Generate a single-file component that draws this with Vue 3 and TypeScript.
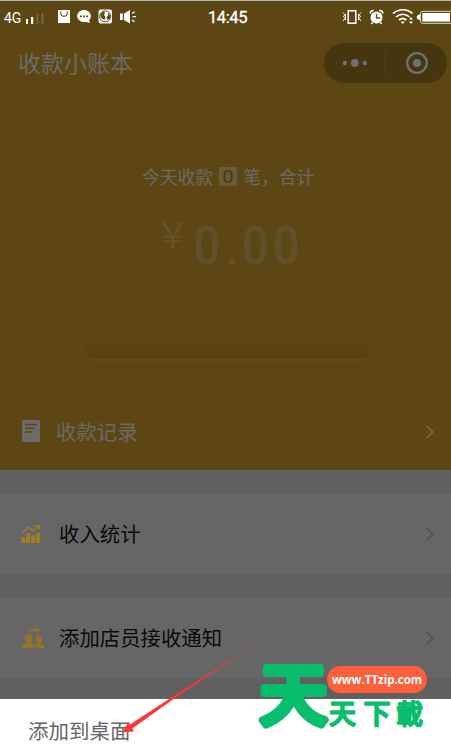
<script setup lang="ts">
interface MenuItem {
  id: 'stats' | 'staff'
  label: string
}

const menu: MenuItem[] = [
  { id: 'stats', label: '收入统计' },
  { id: 'staff', label: '添加店员接收通知' },
]
</script>

<template>
  <main class="phone">
    <section class="hero">
      <div class="status">
        <span class="network">4G</span>
        <svg class="signal" width="18" height="12" viewBox="0 0 18 12">
          <path d="M0 6h2v5H0zM5 4h2.200v7H5z" fill="#fff" />
          <path d="M10.500 1.500h1.800v9.500h-1.800zM15.500 0h1.800v11h-1.800z" fill="#7b6840" />
        </svg>
        <svg class="notices" width="80" height="18" viewBox="0 0 80 18">
          <rect x="0" y="2" width="12" height="13" fill="#fff" />
          <path d="M2.800 3.500v1.500a3.200 3.200 0 0 0 6.400 0V3.500" fill="none" stroke="#5c4714" stroke-width="1.100" />
          <path d="M26 2c4 0 6.800 2.700 6.800 6 0 2-.7 3.300-1.800 4.400l1 2.600-3.600-1.100c-5 1-9.200-1.900-9.200-5.900 0-3.300 2.800-6 6.800-6z" fill="#fff" />
          <path d="M22 7.500h1.800v1.800H22zM25.100 7.500h1.800v1.800h-1.800zM28.200 7.500H30v1.800h-1.800z" fill="#5c4714" />
          <rect x="40.500" y="1.500" width="13.500" height="14" rx="2" fill="#fff" />
          <circle cx="47.200" cy="8.400" r="5.500" fill="none" stroke="#5c4714" stroke-width="1" />
          <path d="M42.500 6l3-2.500 1.500 1-1 2.500 1.500 2-1 3-2.500-1.500-1.500-2zM50 4.500l2 3v3l-2.500 1.500-1-2.500 1.500-2z" fill="#5c4714" />
          <path d="M62 5.500h2.800v6.500H62zM66 5.500l6-3.500v13.500l-6-3.500z" fill="#fff" />
          <path d="M74 5.500l2.700-1.700M74.500 8.700H78M74 12l2.700 1.700" stroke="#fff" stroke-width="1.200" />
        </svg>
        <time class="clock">14:45</time>
        <svg class="device" width="109" height="20" viewBox="0 0 109 20">
          <rect x="6.200" y="3.700" width="7.600" height="12.500" fill="none" stroke="#fff" stroke-width="1.500" />
          <path d="M1 5.500l2 2-1.500 2 1.500 2-2 2.500M3.500 7v6M19 5.500l-2 2 1.500 2-1.500 2 2 2.500M16.500 7v6" fill="none" stroke="#fff" stroke-width="1" />
          <circle cx="34.500" cy="10.500" r="6" fill="#fff" />
          <path d="M28.200 6.500a3 3 0 0 1 3.500-3M37.300 3.500a3 3 0 0 1 3.500 3M30.500 15.500l-1 1.500M38.500 15.500l1 1.500" fill="none" stroke="#fff" stroke-width="1.600" />
          <path d="M34.500 6.800v4.200h3.700" fill="none" stroke="#5c4714" stroke-width="1.300" />
          <path d="M51 6.500c6-5 14-5 19.500 0M54 10c4-3.700 9.500-3.700 13.500 0M57 13c2.500-2 5-2 7.500 0" fill="none" stroke="#fff" stroke-width="1.700" />
          <path d="M58.500 14.500h4.500l-2.200 2.500zM67 12.500l2-2.500 2 2.500zM67 14.500l2 2.500 2-2.500z" fill="#fff" />
          <path d="M109 4.300H80.500a2 2 0 0 0-2 2v8a2 2 0 0 0 2 2H109" fill="none" stroke="#ddd8c9" stroke-width="1" />
          <rect x="80.300" y="6" width="27.700" height="8.600" fill="#fff" />
          <path d="M78 7.500h-1a2.800 2.800 0 0 0 0 5.500h1z" fill="#fff" />
        </svg>
      </div>

      <header class="titlebar">
        <h1>收款小账本</h1>
        <div class="capsule">
          <svg width="26" height="12" viewBox="0 0 26 12" fill="#707070">
            <circle cx="2.800" cy="6" r="2.200" /><circle cx="12.800" cy="6" r="3.900" /><circle cx="22.800" cy="6" r="2.200" />
          </svg>
          <i class="capsule-line"></i>
          <svg width="24" height="24" viewBox="0 0 24 24">
            <circle cx="12" cy="12" r="9.800" fill="none" stroke="#707070" stroke-width="2.300" />
            <circle cx="12" cy="12" r="4" fill="#707070" />
          </svg>
        </div>
      </header>

      <div class="summary">
        <span>今天收款</span><b class="count">0</b><span>笔，合计</span>
      </div>
      <svg class="amount" width="451" height="70" viewBox="0 0 451 70">
        <text class="yen" transform="translate(160.500 41) scale(1.180 1)">¥</text>
        <text class="sum" transform="translate(193.500 56) scale(.87 1)" x="0 37 55.500 91">0.00</text>
      </svg>
      <div class="groove"></div>
      <div class="divider"></div>

      <div class="row records">
        <svg width="18" height="22" viewBox="0 0 18 22">
          <rect width="18" height="22" rx="1.500" fill="#6b6b6b" />
          <path d="M3 4.500h12M3 8.200h9.500M3 12h7" stroke="#5c4714" stroke-width="1.400" />
        </svg>
        <span class="label">收款记录</span>
        <svg class="chevron" width="10" height="14" viewBox="0 0 10 14"><path d="M1.500 1l6.300 6-6.300 6" /></svg>
      </div>
    </section>

    <section v-for="item in menu" :key="item.id" class="row card">
      <svg v-if="item.id === 'stats'" width="24" height="24" viewBox="0 0 24 24">
        <path d="M.3 15.500h4V21h-4zM5.200 11h4v10h-4zM10.200 13.300h4V21h-4zM15 10.800h4.200V21H15z" fill="#a17d27" />
        <path d="M1.500 10.500l6.300-5.500 4 3.500 6-5M14.300 3.700h4v4" fill="none" stroke="#a17d27" stroke-width="1.600" />
      </svg>
      <svg v-else width="24" height="24" viewBox="0 0 24 24" fill="#957428">
        <ellipse cx="7.500" cy="12.500" rx="3.900" ry="4.500" />
        <path d="M5.800 15h3.400v2.500c3.200.7 5.600 1.500 5.600 4.500H.2c0-3 2.400-3.800 5.600-4.500z" />
        <ellipse cx="18" cy="13.200" rx="3.300" ry="4" />
        <path d="M16.600 15.500h3v2.500c2.200.6 3.700 1.400 3.700 4h-7.300c-.1-1.700-.9-2.900-2.200-3.600l2.800-.6z" />
        <path d="M6.300 5.800C8.500 2.700 12 2 15.200 2.800V1l4 3.300-4 3.200V5.300c-3-.8-6-.6-8.900.5z" />
      </svg>
      <span class="label">{{ item.label }}</span>
      <svg class="chevron" width="10" height="14" viewBox="0 0 10 14"><path d="M1.500 1l6.300 6-6.300 6" /></svg>
    </section>

    <footer class="sheet">添加到桌面</footer>

    <svg class="arrow" width="140" height="96" viewBox="0 0 140 96">
      <path d="M2.800 90.200L8.200 80l1.500 2.700L54 53.800 135.500 2.500 55 56 12.300 86.500l1.700 3z" fill="#fb3737" />
    </svg>

    <aside class="watermark">
      <svg width="180" height="110" viewBox="0 0 180 110">
        <text class="big" x="5" y="74">天</text>
        <text class="small" x="74 108.500 141" y="79">天下載</text>
      </svg>
      <span class="site">www.TTzip.com</span>
    </aside>
  </main>
</template>

<style>
body {
  margin: 0;
}
</style>

<style scoped>
.phone {
  position: relative;
  display: flex;
  flex-direction: column;
  gap: 24px;
  width: 451px;
  height: 756px;
  overflow: hidden;
  background: #606060;
  font-family: "Noto Sans CJK SC", sans-serif;
}
svg {
  flex: none;
  overflow: visible;
}
.hero {
  box-sizing: border-box;
  display: flex;
  flex-direction: column;
  height: 470px;
  border-top: 1px solid #aeb5b3;
  background: #5c4714;
}
.status {
  display: flex;
  align-items: center;
  height: 32px;
  color: #fff;
  font-family: Roboto, sans-serif;
}
.network {
  width: 22px;
  padding: 3px 0 0 4px;
  font-size: 14px;
  line-height: 16px;
}
.signal {
  margin-top: 4px;
}
.notices {
  margin-left: 14px;
}
.clock {
  margin-left: 70px;
  width: 42px;
  padding-top: 2px;
  font-size: 16.500px;
  line-height: 20px;
  font-weight: 400;
  letter-spacing: -0.400px;
  -webkit-text-stroke: 0.300px #fff;
}
.device {
  margin-left: auto;
}
.titlebar {
  display: flex;
  align-items: center;
  justify-content: space-between;
  height: 40px;
  margin-top: 10px;
  padding: 0 4px 0 18px;
}
h1 {
  margin: -2px 0 0;
  color: #6d6a65;
  font-size: 23px;
  line-height: 32px;
  font-weight: 400;
}
.capsule {
  box-sizing: border-box;
  display: flex;
  align-items: center;
  justify-content: space-between;
  width: 123px;
  height: 40px;
  padding: 0 18px;
  border-radius: 20px;
  background: #46360f;
}
.capsule-line {
  width: 1px;
  height: 25px;
  margin-left: 5px;
  margin-right: 7px;
  background: #54431b;
}
.summary {
  display: flex;
  align-items: center;
  gap: 6px;
  height: 26px;
  margin: 80px 0 0 142px;
  color: #6d6a65;
  font-size: 17.800px;
  line-height: 26px;
}
.count {
  width: 18px;
  height: 19px;
  margin-top: 2px;
  background: #695a38;
  color: #463610;
  font-family: "Liberation Sans", sans-serif;
  font-size: 19px;
  line-height: 19px;
  font-weight: 400;
  text-align: center;
}
.amount {
  margin-top: 19px;
}
.yen {
  fill: #65542c;
  font: 300 38px "Noto Sans CJK SC", sans-serif;
}
.sum {
  fill: #61502b;
  font: 500 54px Roboto, sans-serif;
}
.groove {
  box-sizing: border-box;
  width: 284px;
  height: 18px;
  margin: 65px 0 0 85px;
  border-bottom: 2px solid #614c1c;
  border-radius: 9px;
  background: #574212;
}
.divider {
  height: 2px;
  margin: 30px 17px 0 21px;
  background: #5b400c;
}
.row {
  box-sizing: border-box;
  display: flex;
  align-items: center;
  padding: 0 16px 0 21px;
}
.label {
  margin-top: -1px;
  font-size: 20.400px;
  line-height: 30px;
}
.records {
  height: 78px;
  padding-left: 22px;
  color: #6d6a65;
}
.records .label {
  margin-left: 16px;
}
.card {
  height: 80px;
  background: #666;
  color: #0a0a0a;
}
.card .label {
  margin-top: -2px;
  margin-left: 14px;
}
.chevron {
  margin-left: auto;
  fill: none;
  stroke: #4d504f;
  stroke-width: 1.400;
}
.records .chevron {
  margin-top: 2px;
  stroke: #706e67;
}
.sheet {
  box-sizing: border-box;
  height: 57px;
  margin-top: -3px;
  padding: 16px 28px 0;
  background: #fff;
  color: #666;
  font-size: 20.500px;
  line-height: 30px;
}
.arrow {
  position: absolute;
  left: 120px;
  top: 642px;
}
.watermark {
  position: absolute;
  left: 255px;
  top: 645px;
  width: 180px;
  height: 110px;
}
.big,
.small {
  fill: #08be6c;
  stroke: #08be6c;
  stroke-linejoin: round;
}
.big {
  font: 400 67px "Noto Sans CJK SC", sans-serif;
  stroke-width: 8px;
}
.small {
  font: 500 27px "Noto Sans CJK TC", sans-serif;
  stroke-width: 1.700px;
}
.site {
  position: absolute;
  left: 72px;
  top: 21px;
  width: 100px;
  height: 27px;
  border-radius: 14px;
  background: #ff603c;
  color: #fff;
  font: 700 11.500px/27px "Open Sans", sans-serif;
  text-align: center;
}
</style>
